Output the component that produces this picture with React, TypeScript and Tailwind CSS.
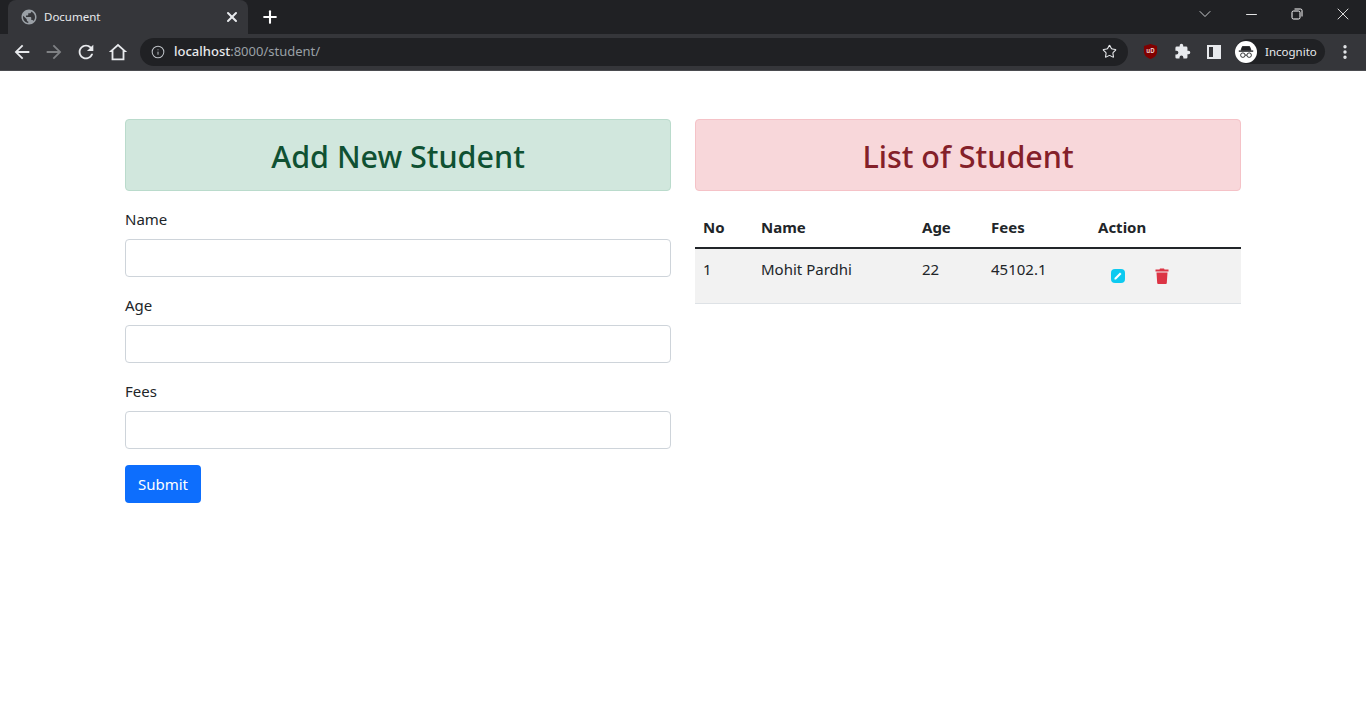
import { ChevronDown, EllipsisVertical, Info, Minus, Plus, Star, X } from "lucide-react";

const font = "font-['Noto_Sans','Open_Sans',sans-serif]";
const fields = ["Name", "Age", "Fees"];

function ToolIcon({ d, className }: { d: string; className: string }) {
  return (
    <div className="flex w-8 justify-center">
      <svg viewBox="0 0 24 24" className={className} fill="currentColor" fillRule="evenodd">
        <path d={d} />
      </svg>
    </div>
  );
}

function TabStrip() {
  return (
    <div className="flex h-[34px] bg-[#202124] pl-2">
      <div className="flex h-[34px] w-[240px] items-center rounded-t-lg bg-[#35363a] pl-[12px] pr-2">
        <svg viewBox="0 0 24 24" className="h-[18px] w-[18px] text-[#9aa0a6]" fill="currentColor">
          <path d="M12 2C6.480 2 2 6.480 2 12s4.480 10 10 10 10-4.480 10-10S17.520 2 12 2zm-1 17.930c-3.950-.490-7-3.850-7-7.930 0-.620.080-1.210.210-1.790L9 15v1c0 1.100.900 2 2 2v1.930zm6.900-2.540c-.260-.810-1-1.390-1.900-1.390h-1v-3c0-.550-.450-1-1-1H8v-2h2c.550 0 1-.450 1-1V7h2c1.100 0 2-.900 2-2v-.410c2.930 1.190 5 4.060 5 7.410 0 2.080-.800 3.970-2.100 5.390z" />
        </svg>
        <span className="ml-[6px] flex-1 text-[11.500px] text-[#e8eaed]">Document</span>
        <X className="h-4 w-4 text-[#e8eaed]" strokeWidth={3} />
      </div>
      <Plus className="ml-[12px] mt-[7px] h-5 w-5 text-white" strokeWidth={2.5} />
      <div className="flex-1" />
      <div className="flex h-[28px] items-center">
        <div className="flex w-[46px] justify-center">
          <ChevronDown className="h-5 w-5 text-[#e8eaed]" strokeWidth={1} />
        </div>
        <div className="flex w-[46px] justify-center">
          <Minus className="h-[17px] w-[17px] text-white" strokeWidth={1.25} />
        </div>
        <div className="flex w-[46px] justify-center">
          <svg viewBox="0 0 12 12" className="h-3 w-3 text-white" fill="none" stroke="currentColor">
            <rect x="1" y="3" width="8" height="8" rx="1.500" />
            <path d="M3.500 1h6a1.500 1.500 0 0 1 1.500 1.500v6" />
          </svg>
        </div>
        <div className="flex w-[46px] justify-center">
          <X className="h-5 w-5 text-white" strokeWidth={1} />
        </div>
      </div>
    </div>
  );
}

function Toolbar() {
  return (
    <div className="flex h-[37px] items-center border-b border-[#4a4b4f] bg-[#35363a] pb-px pl-[6px]">
      <ToolIcon
        className="h-[22px] w-[22px] text-[#e8eaed]"
        d="M20 11H7.830l5.590-5.590L12 4l-8 8 8 8 1.410-1.410L7.830 13H20v-2z"
      />
      <ToolIcon
        className="h-[22px] w-[22px] text-[#7f8184]"
        d="M4 11h12.170l-5.590-5.590L12 4l8 8-8 8-1.410-1.410L16.170 13H4v-2z"
      />
      <ToolIcon
        className="h-[22px] w-[22px] text-[#e8eaed]"
        d="M17.650 6.350C16.200 4.900 14.210 4 12 4c-4.420 0-7.990 3.580-7.990 8s3.570 8 7.990 8c3.730 0 6.840-2.550 7.730-6h-2.080c-.820 2.330-3.040 4-5.650 4-3.310 0-6-2.690-6-6s2.690-6 6-6c1.660 0 3.140.690 4.220 1.780L13 11h7V4l-2.350 2.350z"
      />
      <ToolIcon
        className="h-[22px] w-[22px] text-[#e8eaed]"
        d="M12 3L2 12h3v9h14v-9h3L12 3zM7 19v-8.800l5-4.500 5 4.500V19z"
      />
      <div className="ml-[6px] flex h-[28px] w-[988px] items-center rounded-full bg-[#202124] pl-[11px] pr-[11px]">
        <Info className="h-[14px] w-[14px] text-[#bdc1c6]" strokeWidth={1.75} />
        <span className="ml-[9px] flex-1 text-[13px] text-[#9aa0a6]">
          <span className="font-medium text-[#e8eaed]">localhost</span>:8000/student/
        </span>
        <Star className="h-[15px] w-[15px] text-[#e8eaed]" strokeWidth={1.75} />
      </div>
      <div className="ml-[6px] flex w-8 justify-center">
        <svg viewBox="0 0 16 18" className="h-[17px] w-[15px]">
          <path d="M8 1l7 2v6c0 4-3 6.500-7 8-4-1.500-7-4-7-8V3z" fill="#800000" />
          <text x="8" y="11" textAnchor="middle" fontSize="6.500" fontWeight="700" fill="#e8c8c8">uD</text>
        </svg>
      </div>
      <div className="flex w-8 justify-center">
        <svg viewBox="0 0 24 24" className="h-[17px] w-[17px]" fill="#e8eaed">
          <path d="M20.500 11H19V7a2 2 0 0 0-2-2h-4V3.500a2.500 2.500 0 0 0-5 0V5H4a2 2 0 0 0-2 2v3.800h1.500a2.700 2.700 0 0 1 0 5.400H2V20a2 2 0 0 0 2 2h3.800v-1.500a2.700 2.700 0 0 1 5.400 0V22H17a2 2 0 0 0 2-2v-4h1.500a2.500 2.500 0 0 0 0-5z" />
        </svg>
      </div>
      <div className="flex w-8 justify-center">
        <div className="flex h-[14px] w-[14px] justify-end border-2 border-[#e8eaed]">
          <div className="h-full w-[6px] bg-[#e8eaed]" />
        </div>
      </div>
      <div className="ml-[5px] flex h-[25px] w-[90px] items-center rounded-full bg-[#202124]">
        <div className="flex h-[22px] w-[22px] items-center justify-center rounded-full bg-white">
          <svg viewBox="0 0 20 20" className="h-[18px] w-[18px]" fill="none" stroke="#202124">
            <path d="M6 4h8l1.500 4h-11z" fill="#202124" />
            <path d="M2 9h16" strokeWidth="1.500" />
            <circle cx="6.500" cy="13.500" r="2.500" />
            <circle cx="13.500" cy="13.500" r="2.500" />
            <path d="M9 13.500h2" />
          </svg>
        </div>
        <span className="ml-2 text-[11.500px] text-[#e8eaed]">Incognito</span>
      </div>
      <div className="ml-[4px] flex w-8 justify-center">
        <EllipsisVertical className="h-[18px] w-[18px] text-[#e8eaed]" strokeWidth={2.5} />
      </div>
    </div>
  );
}

function StudentForm() {
  return (
    <div className="w-[546px]">
      <h4 className="flex h-[72px] items-center justify-center rounded border border-[#badbcc] bg-[#d1e7dd] pt-[3px] text-[30.500px] font-medium text-[#0f5132]">
        Add New Student
      </h4>
      <form className="mt-4">
        {fields.map((field) => (
          <div key={field} className="mb-4">
            <label className="mb-2 block h-6 text-[15px] leading-6">{field}</label>
            <input className="block h-[38px] w-full rounded border border-[#ced4da] bg-white" />
          </div>
        ))}
        <button type="button" className="h-[38px] w-[76px] rounded bg-[#0d6efd] pt-px text-[15px] text-white">
          Submit
        </button>
      </form>
    </div>
  );
}

function StudentTable() {
  return (
    <div className="w-[546px]">
      <h4 className="flex h-[72px] items-center justify-center rounded border border-[#f5c2c7] bg-[#f8d7da] pt-[3px] text-[30.500px] font-medium text-[#842029]">
        List of Student
      </h4>
      <table className="mt-4 w-full table-fixed border-collapse text-left text-[15px] text-[#212529]">
        <thead>
          <tr className="h-[41px] border-b-2 border-[#212529]">
            <th className="w-[58px] px-2 font-bold">No</th>
            <th className="w-[161px] px-2 font-bold">Name</th>
            <th className="w-[69px] px-2 font-bold">Age</th>
            <th className="w-[107px] px-2 font-bold">Fees</th>
            <th className="px-2 font-bold">Action</th>
          </tr>
        </thead>
        <tbody>
          <tr className="h-[55px] border-b border-[#dee2e6] bg-[#f2f2f2] align-top">
            <td className="px-2 py-[9px]">1</td>
            <td className="px-2 py-[9px]">Mohit Pardhi</td>
            <td className="px-2 py-[9px]">22</td>
            <td className="px-2 py-[9px]">45102.1</td>
            <td className="px-2 py-2">
              <div className="mt-[11px] flex items-center pl-[13px]">
                <div className="flex h-[14px] w-[14px] items-center justify-center rounded-sm bg-[#0dcaf0]">
                  <svg viewBox="0 0 14 14" className="h-[14px] w-[14px]">
                    <path d="M3.500 9L9 3.500 10.500 5 5 10.500H3.500z" fill="white" />
                  </svg>
                </div>
                <svg viewBox="0 0 14 16" className="ml-[30px] h-4 w-[14px]">
                  <path d="M5 0.500h4l.5 1H13.500v2H.500v-2H4.500zM1.500 4.500h11l-.7 10.500a1 1 0 0 1-1 1H3.200a1 1 0 0 1-1-1z" fill="#dc3545" />
                </svg>
              </div>
            </td>
          </tr>
        </tbody>
      </table>
    </div>
  );
}

export default function App() {
  return (
    <div className={`min-h-[720px] bg-white text-[#212529] ${font}`}>
      <TabStrip />
      <Toolbar />
      <div className="mx-auto mt-12 flex w-[1116px] gap-6">
        <StudentForm />
        <StudentTable />
      </div>
    </div>
  );
}
